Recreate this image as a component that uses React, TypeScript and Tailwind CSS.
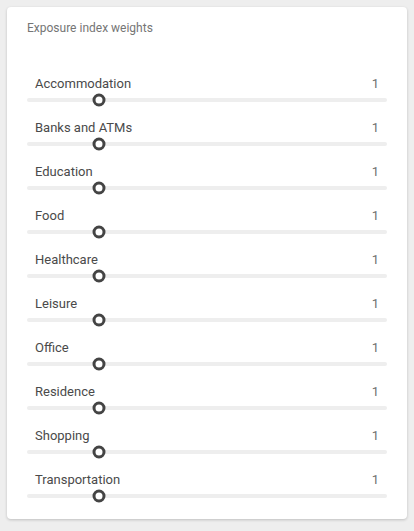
import React from "react";

const items = [
  "Accommodation",
  "Banks and ATMs",
  "Education",
  "Food",
  "Healthcare",
  "Leisure",
  "Office",
  "Residence",
  "Shopping",
  "Transportation",
];

function Row({ label }: { label: string }) {
  return (
    <div className="flex flex-col mb-4">
      <div className="flex justify-between px-2 h-5 items-center text-[13px] leading-5">
        <span className="text-[#4a4a4a]">{label}</span>
        <span className="text-[#707070]">1</span>
      </div>
      <div className="relative mt-1 h-1 rounded-full bg-[#eeeeee]">
        <div className="absolute left-[20%] top-1/2 -translate-x-1/2 -translate-y-1/2 w-[13px] h-[13px] rounded-full border-[3px] border-[#444444] bg-white" />
      </div>
    </div>
  );
}

export default function App() {
  return (
    <div className="w-[414px] h-[531px] bg-[#eeeeee] p-[7px] font-['Roboto',sans-serif]">
      <div className="w-[400px] bg-white rounded shadow-[0_1px_3px_rgba(0,0,0,0.2)] px-5 pt-[13px] pb-[5px]">
        <div className="text-[12px] leading-4 text-[#757575]">Exposure index weights</div>
        <div className="mt-[38px]">
          {items.map((l) => (
            <Row key={l} label={l} />
          ))}
        </div>
      </div>
    </div>
  );
}
